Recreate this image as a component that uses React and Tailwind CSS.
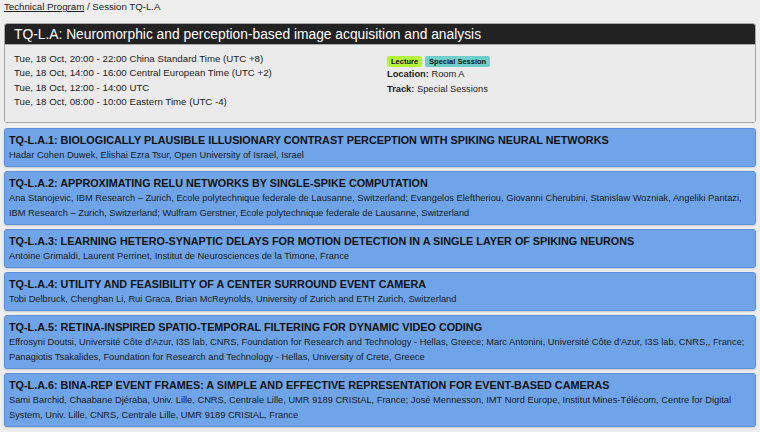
import React from 'react';

const times = [
  'Tue, 18 Oct, 20:00 - 22:00 China Standard Time (UTC +8)',
  'Tue, 18 Oct, 14:00 - 16:00 Central European Time (UTC +2)',
  'Tue, 18 Oct, 12:00 - 14:00 UTC',
  'Tue, 18 Oct, 08:00 - 10:00 Eastern Time (UTC -4)',
];

const papers = [
  {
    title: 'TQ-L.A.1: BIOLOGICALLY PLAUSIBLE ILLUSIONARY CONTRAST PERCEPTION WITH SPIKING NEURAL NETWORKS',
    authors: 'Hadar Cohen Duwek, Elishai Ezra Tsur, Open University of Israel, Israel',
  },
  {
    title: 'TQ-L.A.2: APPROXIMATING RELU NETWORKS BY SINGLE-SPIKE COMPUTATION',
    authors:
      'Ana Stanojevic, IBM Research – Zurich, Ecole polytechnique federale de Lausanne, Switzerland; Evangelos Eleftheriou, Giovanni Cherubini, Stanislaw Wozniak, Angeliki Pantazi, IBM Research – Zurich, Switzerland; Wulfram Gerstner, Ecole polytechnique federale de Lausanne, Switzerland',
  },
  {
    title: 'TQ-L.A.3: LEARNING HETERO-SYNAPTIC DELAYS FOR MOTION DETECTION IN A SINGLE LAYER OF SPIKING NEURONS',
    authors: 'Antoine Grimaldi, Laurent Perrinet, Institut de Neurosciences de la Timone, France',
  },
  {
    title: 'TQ-L.A.4: UTILITY AND FEASIBILITY OF A CENTER SURROUND EVENT CAMERA',
    authors: 'Tobi Delbruck, Chenghan Li, Rui Graca, Brian McReynolds, University of Zurich and ETH Zurich, Switzerland',
  },
  {
    title: 'TQ-L.A.5: RETINA-INSPIRED SPATIO-TEMPORAL FILTERING FOR DYNAMIC VIDEO CODING',
    authors:
      "Effrosyni Doutsi, Université Côte d'Azur, I3S lab, CNRS, Foundation for Research and Technology - Hellas, Greece; Marc Antonini, Université Côte d'Azur, I3S lab, CNRS,, France; Panagiotis Tsakalides, Foundation for Research and Technology - Hellas, University of Crete, Greece",
  },
  {
    title: 'TQ-L.A.6: BINA-REP EVENT FRAMES: A SIMPLE AND EFFECTIVE REPRESENTATION FOR EVENT-BASED CAMERAS',
    authors:
      'Sami Barchid, Chaabane Djéraba, Univ. Lille, CNRS, Centrale Lille, UMR 9189 CRIStAL, France; José Mennesson, IMT Nord Europe, Institut Mines-Télécom, Centre for Digital System, Univ. Lille, CNRS, Centrale Lille, UMR 9189 CRIStAL, France',
  },
];

const PaperCard = ({ paper }) => (
  <div className="bg-[#6fa5e8] border border-[#5b91dc] rounded-[3px] px-[4px] pt-[3px] pb-[3px] shadow-[0_1px_2px_rgba(0,0,0,0.15)]">
    <h3 className="text-[10.8px] leading-[16px] font-bold text-[#111]">{paper.title}</h3>
    <p className="text-[9.3px] leading-[15px] text-[#1a1a1a]">{paper.authors}</p>
  </div>
);

export default function App() {
  return (
    <div
      className="min-h-[432px] bg-[#eeeeee] px-[4px] pb-[8px] text-[#222]"
      style={{ fontFamily: '"Liberation Sans", Arial, sans-serif' }}
    >
      <div className="text-[9.7px] leading-[14px]">
        <a className="underline text-[#222]" href="#">Technical Program</a>
        <span> / Session TQ-L.A</span>
      </div>

      <div className="mt-[9px] border border-[#a9a9a9] rounded-[3px] overflow-hidden">
        <div className="bg-[#222222] text-white text-[13.8px] leading-[19px] px-[9px] pt-[1px] pb-[0px]">
          TQ-L.A: Neuromorphic and perception-based image acquisition and analysis
        </div>
        <div className="bg-[#ebebeb] border-t border-[#a9a9a9] grid grid-cols-2 px-[9px] pt-[7px] pb-[13px]">
          <div className="text-[9.7px] leading-[14.3px]">
            {times.map((t) => (
              <div key={t}>{t}</div>
            ))}
          </div>
          <div className="text-[9.3px] leading-[14.5px] pl-[7px]">
            <div className="flex gap-[3px] mt-[4px]">
              <span className="bg-[#b4f23c] text-[#111] font-bold text-[7.5px] leading-[11px] px-[4px] rounded-[2px]">
                Lecture
              </span>
              <span className="bg-[#6fcfcc] text-[#111] font-bold text-[7.5px] leading-[11px] px-[4px] rounded-[2px]">
                Special Session
              </span>
            </div>
            <div>
              <span className="font-bold">Location:</span> Room A
            </div>
            <div>
              <span className="font-bold">Track:</span> Special Sessions
            </div>
          </div>
        </div>
      </div>

      <div className="mt-[5px] flex flex-col gap-[4px]">
        {papers.map((p) => (
          <PaperCard key={p.title} paper={p} />
        ))}
      </div>
    </div>
  );
}
